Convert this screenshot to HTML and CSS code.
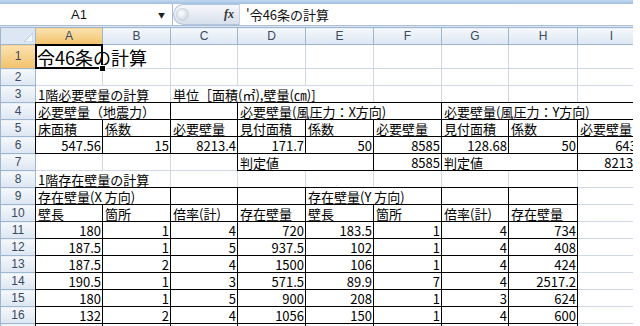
FILE: index.html
```html
<!DOCTYPE html>
<html lang="ja">
<head>
<meta charset="UTF-8">
<title>令46条の計算</title>
<link rel="stylesheet" href="styles.css">
</head>
<body>
<div class="app">
    <div class="ribbon-edge"></div>
    <div class="formula-bar">
        <div class="name-box"><span class="name">A1</span><span class="drop">&#9660;</span></div>
        <div class="fx-box"><span class="knob"></span><span class="fx">fx</span></div>
        <div class="formula">'令46条の計算</div>
    </div>
    <div class="sheet">
        <table class="grid">
            <colgroup>
                <col class="c-head">
                <col style="width:67px"><col style="width:68px"><col style="width:67px">
                <col style="width:68px"><col style="width:68px"><col style="width:68px">
                <col style="width:67px"><col style="width:69px"><col style="width:68px">
            </colgroup>
            <tr class="cols">
                <th class="corner"><svg width="9" height="9" viewBox="0 0 9 9"><polygon points="9,0 9,9 0,9" fill="#f4f7fb" stroke="#b9c9dc" stroke-width="1"/></svg></th>
                <th class="on">A</th><th>B</th><th>C</th><th>D</th><th>E</th><th>F</th><th>G</th><th>H</th><th>I</th>
            </tr>
            <tr class="r1">
                <th class="on">1</th>
                <td class="title sel">令46条の計算</td><td></td><td></td><td></td><td></td><td></td><td></td><td></td><td></td>
            </tr>
            <tr>
                <th>2</th>
                <td></td><td></td><td></td><td></td><td></td><td></td><td></td><td></td><td></td>
            </tr>
            <tr>
                <th>3</th>
                <td colspan="2">1階必要壁量の計算</td><td colspan="3">単位［面積(㎡),壁量(㎝)]</td><td></td><td></td><td></td><td></td>
            </tr>
            <tr>
                <th>4</th>
                <td class="b" colspan="2">必要壁量（地震力）</td><td class="b"></td>
                <td class="b" colspan="3">必要壁量(風圧力：X方向)</td>
                <td class="b" colspan="3">必要壁量(風圧力：Y方向)</td>
            </tr>
            <tr>
                <th>5</th>
                <td class="b">床面積</td><td class="b">係数</td><td class="b">必要壁量</td>
                <td class="b">見付面積</td><td class="b">係数</td><td class="b">必要壁量</td>
                <td class="b">見付面積</td><td class="b">係数</td><td class="b">必要壁量</td>
            </tr>
            <tr>
                <th>6</th>
                <td class="b n">547.56</td><td class="b n">15</td><td class="b n">8213.4</td>
                <td class="b n">171.7</td><td class="b n">50</td><td class="b n">8585</td>
                <td class="b n">128.68</td><td class="b n">50</td><td class="b n">6434</td>
            </tr>
            <tr>
                <th>7</th>
                <td></td><td></td><td></td>
                <td class="b" colspan="2">判定値</td><td class="b n">8585</td>
                <td class="b" colspan="2">判定値</td><td class="b n">8213.4</td>
            </tr>
            <tr>
                <th>8</th>
                <td colspan="2">1階存在壁量の計算</td><td></td><td></td><td></td><td></td><td></td><td></td><td></td>
            </tr>
            <tr>
                <th>9</th>
                <td class="b" colspan="2">存在壁量(X 方向)</td><td class="b"></td><td class="b"></td>
                <td class="b" colspan="2">存在壁量(Y 方向)</td><td class="b"></td><td class="b"></td>
                <td></td>
            </tr>
            <tr>
                <th>10</th>
                <td class="b">壁長</td><td class="b">箇所</td><td class="b">倍率(計)</td><td class="b">存在壁量</td>
                <td class="b">壁長</td><td class="b">箇所</td><td class="b">倍率(計)</td><td class="b">存在壁量</td>
                <td></td>
            </tr>
            <tr>
                <th>11</th>
                <td class="b n">180</td><td class="b n">1</td><td class="b n">4</td><td class="b n">720</td>
                <td class="b n">183.5</td><td class="b n">1</td><td class="b n">4</td><td class="b n">734</td>
                <td></td>
            </tr>
            <tr>
                <th>12</th>
                <td class="b n">187.5</td><td class="b n">1</td><td class="b n">5</td><td class="b n">937.5</td>
                <td class="b n">102</td><td class="b n">1</td><td class="b n">4</td><td class="b n">408</td>
                <td></td>
            </tr>
            <tr>
                <th>13</th>
                <td class="b n">187.5</td><td class="b n">2</td><td class="b n">4</td><td class="b n">1500</td>
                <td class="b n">106</td><td class="b n">1</td><td class="b n">4</td><td class="b n">424</td>
                <td></td>
            </tr>
            <tr>
                <th>14</th>
                <td class="b n">190.5</td><td class="b n">1</td><td class="b n">3</td><td class="b n">571.5</td>
                <td class="b n">89.9</td><td class="b n">7</td><td class="b n">4</td><td class="b n">2517.2</td>
                <td></td>
            </tr>
            <tr>
                <th>15</th>
                <td class="b n">180</td><td class="b n">1</td><td class="b n">5</td><td class="b n">900</td>
                <td class="b n">208</td><td class="b n">1</td><td class="b n">3</td><td class="b n">624</td>
                <td></td>
            </tr>
            <tr>
                <th>16</th>
                <td class="b n">132</td><td class="b n">2</td><td class="b n">4</td><td class="b n">1056</td>
                <td class="b n">150</td><td class="b n">1</td><td class="b n">4</td><td class="b n">600</td>
                <td></td>
            </tr>
            <tr>
                <th>17</th>
                <td class="b n">120</td><td class="b n">1</td><td class="b n">3</td><td class="b n">360</td>
                <td class="b n">110</td><td class="b n">1</td><td class="b n">3</td><td class="b n">330</td>
                <td></td>
            </tr>
        </table>
    </div>
</div>
</body>
</html>
```

FILE: styles.css
```css
body {
    margin: 0;
    background: #fff;
    font-family: "Noto Sans CJK JP", sans-serif;
}
.app {
    width: 633px;
    height: 326px;
    overflow: hidden;
    background: #dbe5f2;
}
.ribbon-edge {
    height: 4px;
    background: linear-gradient(#c4d8ee, #9fbfe3);
}
.formula-bar {
    display: flex;
    height: 21px;
    background: #fff;
    border-bottom: 1px solid #a9bdd6;
}
.name-box {
    width: 172px;
    display: flex;
    align-items: center;
    border-right: 1px solid #a9bdd6;
}
.name {
    flex: 1;
    text-align: center;
    font-family: "Liberation Sans", sans-serif;
    font-size: 13px;
    color: #111;
}
.drop {
    width: 14px;
    font-size: 7px;
    color: #222;
}
.fx-box {
    width: 66px;
    display: flex;
    align-items: center;
    justify-content: space-between;
    padding: 0 5px 0 2px;
    box-sizing: border-box;
    border: 1px solid #b3c4d9;
    border-right: 0;
    border-radius: 11px 0 0 11px;
    background: linear-gradient(#f6f8fb, #d6e0ec);
}
.knob {
    width: 11px;
    height: 11px;
    border-radius: 50%;
    background: radial-gradient(circle at 40% 40%, #ffffff, #c3ccd6);
    border: 1px solid #c8d1dc;
}
.fx {
    font-family: "Liberation Serif", serif;
    font-style: italic;
    font-weight: bold;
    font-size: 12px;
    color: #333;
}
.formula {
    flex: 1;
    padding-left: 6px;
    font-size: 13px;
    line-height: 21px;
    color: #111;
    border-left: 1px solid #c9d5e3;
}
.sheet {
    margin-top: 1px;
}

/* grid */
.grid {
    border-collapse: collapse;
    table-layout: fixed;
    width: 645px;
    background: #fff;
    font-size: 13px;
    color: #000;
}
.c-head {
    width: 35px;
}
.grid tr {
    height: 17px;
}
.grid tr.r1 {
    height: 24px;
}
.grid th {
    padding: 0;
    border: 1px solid #9eb6ce;
    background: linear-gradient(#f5f8fc, #dce6f2);
    font-family: "Liberation Sans", sans-serif;
    font-weight: normal;
    font-size: 12px;
    color: #3b4a5c;
    text-align: center;
    line-height: 15px;
}
.grid th.on {
    background: linear-gradient(#fbe2b0, #f2c26a);
}
.grid th.corner {
    text-align: right;
    vertical-align: bottom;
    line-height: 0;
    padding: 0 2px 2px 0;
    background: #dde7f3;
}
.grid td {
    padding: 0 2px;
    border: 1px solid #d0d7e5;
    white-space: nowrap;
    line-height: 15px;
    vertical-align: bottom;
}
/* 1px double paints as solid and wins the collapsed-border conflict over the gridlines */
.grid td.b {
    border: 1px double #000;
}
.grid td.n {
    text-align: right;
    padding-right: 1px;
}
.grid td.title {
    font-size: 18px;
    line-height: 22px;
    padding-left: 1px;
}
.grid td.sel {
    position: relative;
}
.grid td.sel::before {
    content: "";
    position: absolute;
    left: -1px;
    top: -1px;
    right: -1px;
    bottom: -1px;
    border: 2px solid #000;
}
.grid td.sel::after {
    content: "";
    position: absolute;
    right: -4px;
    bottom: -4px;
    width: 5px;
    height: 5px;
    background: #000;
    border: 1px solid #fff;
}
```
